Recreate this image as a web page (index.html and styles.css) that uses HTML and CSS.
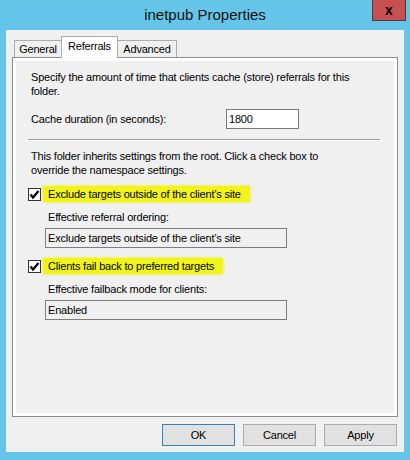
FILE: index.html
```html
<!DOCTYPE html>
<html lang="en">
<head>
  <meta charset="UTF-8" />
  <title>inetpub Properties</title>
  <link rel="stylesheet" href="styles.css">
</head>
<body>

  <div class="window">
    <div class="titlebar">
      <span></span>
      <div class="title">inetpub Properties</div>
      <button class="close">x</button>
    </div>

    <div class="client">
      <div class="tabs">
        <div class="tab">General</div>
        <div class="tab active">Referrals</div>
        <div class="tab">Advanced</div>
      </div>

      <div class="panel">
        <div class="page">
          <p class="note">Specify the amount of time that clients cache (store) referrals for this<br>folder.</p>

          <div class="cache-row">
            <label for="cache">Cache duration (in seconds):</label>
            <input type="text" id="cache" class="field" value="1800" />
          </div>

          <div class="separator"></div>

          <p class="note second">This folder inherits settings from the root. Click a check box to<br>override the namespace settings.</p>

          <div class="check-row">
            <span class="checkbox">
              <svg width="11" height="11" viewBox="0 0 11 11"><path d="M1.5 5.5 L4 8.5 L9.5 2" fill="none" stroke="#000" stroke-width="2.2"/></svg>
            </span>
            <span class="mark">Exclude targets outside of the client&#8217;s site</span>
          </div>
          <div class="sub-label">Effective referral ordering:</div>
          <div class="readonly">Exclude targets outside of the client&#8217;s site</div>

          <div class="check-row second-check">
            <span class="checkbox">
              <svg width="11" height="11" viewBox="0 0 11 11"><path d="M1.5 5.5 L4 8.5 L9.5 2" fill="none" stroke="#000" stroke-width="2.2"/></svg>
            </span>
            <span class="mark">Clients fail back to preferred targets</span>
          </div>
          <div class="sub-label">Effective failback mode for clients:</div>
          <div class="readonly">Enabled</div>
        </div>
      </div>

      <div class="buttons">
        <button class="btn default">OK</button>
        <button class="btn">Cancel</button>
        <button class="btn">Apply</button>
      </div>
    </div>
  </div>

</body>
</html>
```

FILE: styles.css
```css
body {
  margin: 0;
  background: #64c5e8;
  font-family: 'Liberation Sans', Arial, sans-serif;
  font-size: 11px;
  letter-spacing: -0.2px;
  color: #000;
}

.window {
  width: 410px;
  height: 460px;
}

.titlebar {
  height: 30px;
  display: grid;
  grid-template-columns: 1fr auto 1fr;
  align-items: start;
}

.title {
  font-size: 15px;
  letter-spacing: 0;
  line-height: 30px;
  color: #111;
}

.close {
  justify-self: end;
  margin-right: 4px;
  width: 34px;
  height: 21px;
  padding: 0;
  border: 1px solid #5b3838;
  border-top: none;
  background: #c75050;
  font-family: 'Liberation Sans', Arial, sans-serif;
  font-weight: bold;
  font-size: 14px;
  line-height: 16px;
  color: #000;
}

.client {
  margin: 0 6px;
  height: 422px;
  background: #f0f0f0;
}

.tabs {
  height: 27px;
  display: flex;
  align-items: flex-end;
  padding-left: 8px;
}

.tab {
  height: 16px;
  line-height: 16px;
  border: 1px solid #acacac;
  border-bottom: none;
  background: #f0f0f0;
  text-align: center;
}

.tab:nth-child(1) { width: 46px; }
.tab:nth-child(3) { width: 58px; margin-left: -1px; }

.tab.active {
  position: relative;
  width: 55px;
  height: 21px;
  line-height: 19px;
  margin-left: -1px;
  margin-bottom: -1px;
  background: #fff;
  z-index: 1;
}

.panel {
  margin: 0 6px;
  height: 352px;
  border: 1px solid #8c8c8c;
  background: #fff;
  padding: 3px;
}

.page {
  height: 100%;
  background: #f0f0f0;
  padding: 9px 14px 0 15px;
  box-sizing: border-box;
}

.note {
  margin: 0;
  line-height: 14px;
  white-space: nowrap;
}

.note.second {
  margin-top: 8px;
}

.cache-row {
  display: grid;
  grid-template-columns: 195px 73px;
  align-items: center;
  margin-top: 11px;
}

.field {
  box-sizing: border-box;
  width: 73px;
  height: 20px;
  margin: 0;
  padding: 0 2px;
  border: 1px solid #7a7a7a;
  background: #fff;
  font: inherit;
  letter-spacing: inherit;
  color: #000;
}

.separator {
  margin: 10px 0 0 -3px;
  height: 1px;
  background: #a0a0a0;
  border-bottom: 1px solid #fff;
}

.check-row {
  display: flex;
  align-items: center;
  height: 16px;
  margin: 9px 0 0 -3px;
}

.check-row.second-check {
  margin-top: 10px;
}

.checkbox {
  box-sizing: border-box;
  width: 13px;
  height: 13px;
  border: 1px solid #333;
  background: #fff;
  display: flex;
}

.mark {
  margin-left: 2px;
  height: 16px;
  line-height: 16px;
  padding: 0 9px 0 5px;
  background: #f1f41c;
  border-radius: 2px;
  box-shadow: 0 0 2px 1px rgba(241, 244, 28, 0.6);
}

.sub-label {
  margin: 8px 0 0 17px;
  line-height: 14px;
}

.readonly {
  box-sizing: border-box;
  width: 242px;
  height: 20px;
  margin: 4px 0 0 14px;
  padding: 0 2px;
  border: 1px solid #7d7d7d;
  line-height: 18px;
}

.buttons {
  display: flex;
  justify-content: flex-end;
  gap: 8px;
  margin: 7px 7px 0 0;
}

.btn {
  width: 73px;
  height: 22px;
  padding: 0;
  border: 1px solid #adadad;
  background: #e1e1e1;
  font: inherit;
  letter-spacing: inherit;
  color: #000;
}

.btn.default {
  border-color: #3c7fb1;
}
```
